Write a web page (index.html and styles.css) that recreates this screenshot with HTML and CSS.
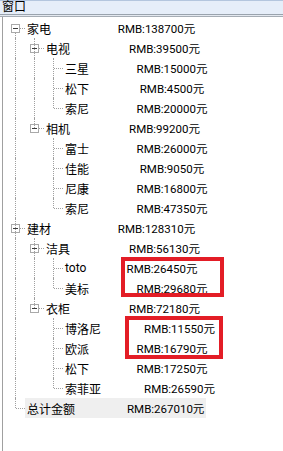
FILE: index.html
```html
<!DOCTYPE html>
<html lang="zh-CN">
<head>
  <meta charset="UTF-8">
  <title>窗口</title>
  <link rel="stylesheet" href="styles.css">
</head>
<body>

<div class="titlebar">窗口</div>

<div class="tree">
  <div class="row"><span class="cell first box"></span><span class="label"><span class="name l0">家电</span><span class="value">RMB:138700元</span></span></div>
  <div class="row"><span class="cell line"></span><span class="cell tee box"></span><span class="label"><span class="name l1">电视</span><span class="value">RMB:39500元</span></span></div>
  <div class="row"><span class="cell line"></span><span class="cell line"></span><span class="cell tee"></span><span class="label"><span class="name l2">三星</span><span class="value">RMB:15000元</span></span></div>
  <div class="row"><span class="cell line"></span><span class="cell line"></span><span class="cell tee"></span><span class="label"><span class="name l2">松下</span><span class="value">RMB:4500元</span></span></div>
  <div class="row"><span class="cell line"></span><span class="cell line"></span><span class="cell elbow"></span><span class="label"><span class="name l2">索尼</span><span class="value">RMB:20000元</span></span></div>
  <div class="row"><span class="cell line"></span><span class="cell elbow box"></span><span class="label"><span class="name l1">相机</span><span class="value">RMB:99200元</span></span></div>
  <div class="row"><span class="cell line"></span><span class="cell"></span><span class="cell tee"></span><span class="label"><span class="name l2">富士</span><span class="value">RMB:26000元</span></span></div>
  <div class="row"><span class="cell line"></span><span class="cell"></span><span class="cell tee"></span><span class="label"><span class="name l2">佳能</span><span class="value">RMB:9050元</span></span></div>
  <div class="row"><span class="cell line"></span><span class="cell"></span><span class="cell tee"></span><span class="label"><span class="name l2">尼康</span><span class="value">RMB:16800元</span></span></div>
  <div class="row"><span class="cell line"></span><span class="cell"></span><span class="cell elbow"></span><span class="label"><span class="name l2">索尼</span><span class="value">RMB:47350元</span></span></div>
  <div class="row"><span class="cell tee box"></span><span class="label"><span class="name l0">建材</span><span class="value">RMB:128310元</span></span></div>
  <div class="row"><span class="cell line"></span><span class="cell tee box"></span><span class="label"><span class="name l1">洁具</span><span class="value">RMB:56130元</span></span></div>
  <div class="row"><span class="cell line"></span><span class="cell line"></span><span class="cell tee"></span><span class="label"><span class="name l2 latin">toto</span><span class="value">RMB:26450元</span></span></div>
  <div class="row"><span class="cell line"></span><span class="cell line"></span><span class="cell elbow"></span><span class="label"><span class="name l2">美标</span><span class="value">RMB:29680元</span></span></div>
  <div class="row"><span class="cell line"></span><span class="cell elbow box"></span><span class="label"><span class="name l1">衣柜</span><span class="value">RMB:72180元</span></span></div>
  <div class="row"><span class="cell line"></span><span class="cell"></span><span class="cell tee"></span><span class="label"><span class="name l2 wide">博洛尼</span><span class="value">RMB:11550元</span></span></div>
  <div class="row"><span class="cell line"></span><span class="cell"></span><span class="cell tee"></span><span class="label"><span class="name l2">欧派</span><span class="value">RMB:16790元</span></span></div>
  <div class="row"><span class="cell line"></span><span class="cell"></span><span class="cell tee"></span><span class="label"><span class="name l2">松下</span><span class="value">RMB:17250元</span></span></div>
  <div class="row"><span class="cell line"></span><span class="cell"></span><span class="cell elbow"></span><span class="label"><span class="name l2 wide">索菲亚</span><span class="value">RMB:26590元</span></span></div>
  <div class="row"><span class="cell elbow"></span><span class="label selected"><span class="name total">总计金额</span><span class="value">RMB:267010元</span></span></div>

  <div class="mark mark-a"></div>
  <div class="mark mark-b"></div>
</div>

</body>
</html>
```

FILE: styles.css
```css
body {
  margin: 0;
  font-family: Roboto, "Noto Sans CJK SC", sans-serif;
  font-size: 12px;
  color: #000;
  background: #fff;
}

.titlebar {
  height: 13px;
  line-height: 13px;
  padding-left: 2px;
  background: #e6eef9;
  border-top: 1px solid #b4c6de;
  border-bottom: 1px solid #9aa3ad;
  box-shadow: 0 1px 0 #e4e9f0, 0 2px 0 #a6adb5;
}

.tree {
  position: relative;
  margin: 2px 0 0 2px;
  padding: 1px 0 0 3px;
  border-left: 1px solid #a0a0a0;
  height: 433px;
}

.row {
  display: flex;
  align-items: center;
  height: 20px;
}

.cell {
  position: relative;
  flex: 0 0 19px;
  height: 20px;
}

/* dotted guide lines */
.line::before,
.tee::before,
.elbow::before,
.first::before {
  content: "";
  position: absolute;
  left: 9px;
  width: 0;
  border-left: 1px dotted #a0a0a0;
}

.line::before,
.tee::before {
  top: 0;
  height: 20px;
}

.elbow::before {
  top: 0;
  height: 10px;
}

.first::before {
  top: 15px;
  height: 5px;
}

.tee::after,
.elbow::after,
.first::after {
  content: "";
  position: absolute;
  left: 10px;
  top: 10px;
  width: 9px;
  border-top: 1px dotted #a0a0a0;
}

/* expander box with minus sign */
.cell.box {
  background:
    linear-gradient(#3c3c3c, #3c3c3c) 7px 10px / 5px 1px no-repeat,
    linear-gradient(#fff, #fff) 6px 7px / 7px 7px no-repeat,
    linear-gradient(#a9a9a9, #a9a9a9) 5px 6px / 9px 9px no-repeat;
}

.cell.box::after {
  left: 14px;
  width: 5px;
}

.label {
  display: flex;
  align-items: center;
  height: 20px;
  padding: 0 2px;
  white-space: nowrap;
}

.name.l0 { width: 84.5px; }
.name.l1 { width: 73.5px; }
.name.l2 { width: 62px; }
.name.l2.latin { width: 52px; }
.name.l2.wide { width: 69.5px; }
.name.total { width: 100px; }

.value {
  width: 90px;
  text-align: center;
  font-size: 11.5px;
}

.selected {
  background: #efefef;
}

.selected .value {
  width: auto;
}

.mark {
  position: absolute;
  border: 4px solid #e31d26;
}

.mark-a {
  left: 118px;
  top: 240px;
  width: 95px;
  height: 32px;
}

.mark-b {
  left: 122px;
  top: 299px;
  width: 90px;
  height: 35px;
}
```
